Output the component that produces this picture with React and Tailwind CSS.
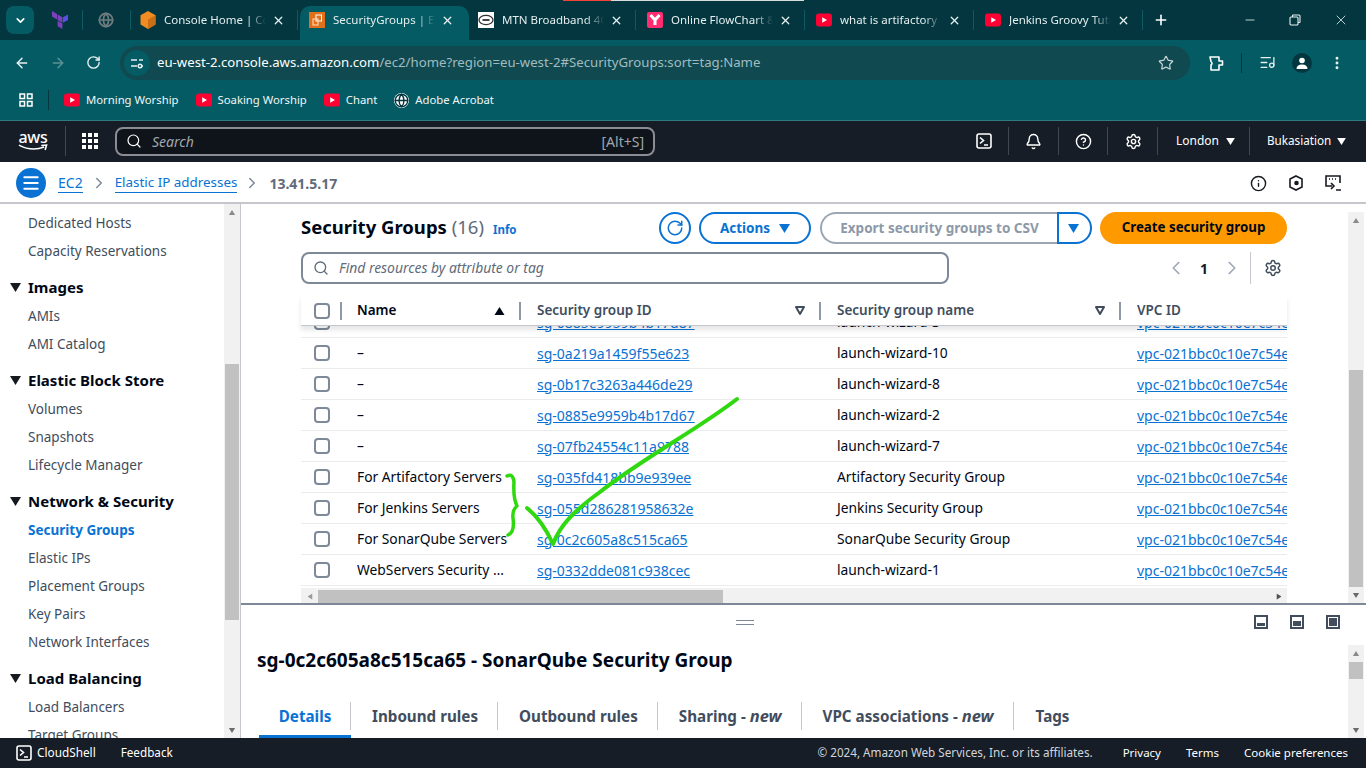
import React from 'react';
import { ArrowLeft, ArrowRight, RotateCw, Star, X, Plus, Minus, ChevronDown, ChevronLeft, ChevronRight, Search, Bell, CircleHelp, Settings, Info, Menu, EllipsisVertical, Globe, ListMusic } from 'lucide-react';

const YouTube = ({ className = '' }) => (
  <svg viewBox="0 0 16 16" className={`w-[16px] h-[16px] shrink-0 ${className}`}>
    <rect x="0" y="1.5" width="16" height="13" rx="3" fill="#ff0033" />
    <path d="M6.2 5.2 L11 8 L6.2 10.8 Z" fill="#fff" />
  </svg>
);

// solid triangle used all over the console (menus, sort, nav sections)
const Tri = ({ up, className = '' }) => (
  <svg viewBox="0 0 10 8" className={`shrink-0 ${className}`} fill="currentColor">
    <path d={up ? 'M5 0 L10 8 H0 Z' : 'M0 0 H10 L5 8 Z'} />
  </svg>
);

const SortTri = () => (
  <svg viewBox="0 0 10 9" className="w-[10px] h-[9px] block" fill="none" stroke="#414d5c" strokeWidth="2" strokeLinejoin="round">
    <path d="M1 1 H9 L5 8 Z" />
  </svg>
);

const CubeIcon = () => (
  <svg viewBox="0 0 16 18" className="w-[16px] h-[18px] shrink-0">
    <path d="M8 0 L15.5 4.2 V13.6 L8 18 L0.5 13.6 V4.2 Z" fill="#f08c22" />
    <path d="M8 8.4 L15.5 4.2 V13.6 L8 18 Z" fill="#c96f15" />
  </svg>
);

const SgIcon = () => (
  <svg viewBox="0 0 16 16" className="w-[16px] h-[16px] shrink-0">
    <rect width="16" height="16" fill="#e2701a" />
    <rect x="7" y="3" width="5.5" height="6" fill="none" stroke="#fff" strokeWidth="1" />
    <rect x="4" y="7" width="5" height="6" fill="none" stroke="#ffe2c8" strokeWidth="1" />
  </svg>
);

const MtnIcon = () => (
  <svg viewBox="0 0 16 16" className="w-[16px] h-[16px] shrink-0">
    <rect width="16" height="16" fill="#fff" />
    <ellipse cx="8" cy="8" rx="7" ry="4.6" fill="none" stroke="#333" strokeWidth="1.3" />
    <rect x="4.5" y="7" width="7" height="2" fill="#444" />
  </svg>
);

const FlowIcon = () => (
  <svg viewBox="0 0 16 16" className="w-[16px] h-[16px] shrink-0">
    <rect width="16" height="16" rx="2" fill="#ff2d6f" />
    <path d="M3.5 3 L8 8 L12.5 3 M8 8 V13" fill="none" stroke="#fff" strokeWidth="3" />
  </svg>
);

const Terraform = () => (
  <svg viewBox="0 0 16 18" className="w-[16px] h-[18px] shrink-0" fill="#7b42bc">
    <path d="M0 0 L5 3 V8.5 L0 5.6 Z" />
    <path d="M5.6 3.4 L10.4 6.2 V11.8 L5.6 9 Z" />
    <path d="M11 6.2 L16 3.4 V9 L11 11.8 Z" fill="#5c4ee5" />
    <path d="M5.6 9.8 L10.4 12.6 V18 L5.6 15.2 Z" />
  </svg>
);

const Tab = ({ icon, title, active }) => (
  <div className={`relative w-[169px] h-[34px] shrink-0 flex items-center pl-[9px] pb-[6px] ${active ? 'bg-[#055b63] rounded-t-[10px]' : ''}`}>
    <span className="w-[16px] flex justify-center">{icon}</span>
    <span className="ml-[8px] w-[102px] overflow-hidden whitespace-nowrap text-[11.5px] text-[#e4eeef] [mask-image:linear-gradient(to_right,black_82%,transparent)]">{title}</span>
    <X size={13} strokeWidth={2.4} className="ml-[6px] text-[#e8f1f2]" />
    {!active && <span className="absolute right-[2px] top-[4px] h-[20px] w-px bg-[#0f5961]" />}
  </div>
);

const TabStrip = () => (
  <div className="relative h-[40px] bg-[#03363f] flex items-end pl-[6px]">
    <span className="absolute left-[563px] top-0 h-px w-[48px] bg-[#f44336]" />
    <span className="absolute left-[611px] top-0 h-px w-[193px] bg-[#d5dcdd]" />
    <div className="self-start mt-[6px] w-[28px] h-[28px] rounded-[8px] bg-[#055b63] flex items-center justify-center text-white">
      <ChevronDown size={13} strokeWidth={3} />
    </div>
    <div className="h-[34px] w-[49px] flex items-center pl-[18px] pb-[6px] relative">
      <Terraform />
      <span className="absolute right-[0px] top-[4px] h-[20px] w-px bg-[#0f5961]" />
    </div>
    <div className="h-[34px] w-[48px] flex items-center pl-[15px] pb-[6px] relative">
      <Globe size={16} className="text-[#6f7c80]" strokeWidth={2.6} />
      <span className="absolute right-0 top-[4px] h-[20px] w-px bg-[#0f5961]" />
    </div>
    <Tab icon={<CubeIcon />} title="Console Home | Console" />
    <Tab active icon={<SgIcon />} title="SecurityGroups | EC2" />
    <Tab icon={<MtnIcon />} title="MTN Broadband 4G" />
    <Tab icon={<FlowIcon />} title="Online FlowChart &" />
    <Tab icon={<YouTube />} title="what is artifactory" />
    <Tab icon={<YouTube />} title="Jenkins Groovy Tutorial" />
    <div className="h-[34px] flex items-center ml-[8px] pb-[6px] text-white"><Plus size={16} strokeWidth={2.4} /></div>
    <div className="ml-auto h-[40px] flex items-center text-[#e8f1f2] pr-[17px] gap-[32px]">
      <Minus size={14} strokeWidth={1.4} />
      <svg viewBox="0 0 12 12" className="w-[12px] h-[12px]" fill="none" stroke="currentColor" strokeWidth="1.1">
        <rect x="1" y="3" width="8" height="8" rx="1" />
        <path d="M3.5 3 V1.5 a.5 .5 0 0 1 .5 -.5 H10 a1 1 0 0 1 1 1 V8 a.5 .5 0 0 1 -.5 .5 H9" />
      </svg>
      <X size={16} strokeWidth={1.2} />
    </div>
  </div>
);

const Toolbar = () => (
  <div className="h-[44px] bg-[#055b63] flex items-center pt-px text-[#e8f1f2]">
    <ArrowLeft size={16} strokeWidth={2.2} className="ml-[14px]" />
    <ArrowRight size={16} strokeWidth={2.2} className="ml-[20px] text-[#5c9298]" />
    <RotateCw size={15} strokeWidth={2.2} className="ml-[20px]" />
    <div className="ml-[19px] w-[1070px] h-[34px] rounded-full bg-[#10494f] flex items-center pl-[4px]">
      <span className="w-[26px] h-[26px] rounded-full bg-[#055b63] flex items-center justify-center">
        <svg viewBox="0 0 14 14" className="w-[14px] h-[14px]" fill="none" stroke="#e8f1f2" strokeWidth="1.4">
          <path d="M1 4 H7 M11 10 H13 M1 10 H7" />
          <path d="M9 4 H13" />
          <circle cx="10" cy="10" r="1.8" />
        </svg>
      </span>
      <span className="ml-[7px] text-[13.2px] text-white whitespace-nowrap">eu-west-2.console.aws.amazon.com<span className="text-[#a0bcc0]">/ec2/home?region=eu-west-2#SecurityGroups:sort=tag:Name</span></span>
      <Star size={16} strokeWidth={1.8} className="ml-auto mr-[16px] text-[#c6d4d6]" />
    </div>
    <svg viewBox="0 0 16 18" className="ml-[18px] w-[16px] h-[18px]" fill="none" stroke="#fff" strokeWidth="1.6">
      <path d="M2 3 H11 V7 H14.5 V11 H11 V16 H3 V11 Q5 9.500 3 7.500 Z" strokeLinejoin="round" />
    </svg>
    <span className="ml-[17px] h-[20px] w-px bg-[#03363f]" />
    <ListMusic size={17} strokeWidth={1.8} className="ml-[17px]" />
    <span className="ml-[16px] w-[20px] h-[20px] rounded-full bg-[#03363f] flex items-center justify-center">
      <svg viewBox="0 0 14 14" className="w-[14px] h-[14px]" fill="#fff"><circle cx="7" cy="4.500" r="2.800" /><path d="M1.500 13 Q1.500 8.500 7 8.500 Q12.500 8.500 12.500 13 Z" /></svg>
    </span>
    <EllipsisVertical size={16} strokeWidth={2.4} className="ml-[17px]" />
  </div>
);

const Bookmark = ({ icon, label }) => (
  <div className="flex items-center gap-[6px] mr-[17px]">
    {icon}
    <span className="text-[11.3px] text-[#f0f6f6]">{label}</span>
  </div>
);

const Bookmarks = () => (
  <div className="h-[36px] bg-[#055b63] flex items-center pl-[19px] pb-[4px]">
    <svg viewBox="0 0 14 14" className="w-[14px] h-[14px]" fill="none" stroke="#fff" strokeWidth="1.5">
      <rect x="1" y="1" width="4.500" height="4.500" /><rect x="8.500" y="1" width="4.500" height="4.500" />
      <rect x="1" y="8.500" width="4.500" height="4.500" /><rect x="8.500" y="8.500" width="4.500" height="4.500" />
    </svg>
    <span className="ml-[15px] mr-[15px] h-[20px] w-px bg-[#03363f]" />
    <Bookmark icon={<YouTube />} label="Morning Worship" />
    <Bookmark icon={<YouTube />} label="Soaking Worship" />
    <Bookmark icon={<YouTube />} label="Chant" />
    <Bookmark icon={<Globe size={15} className="text-[#03363f] bg-white rounded-full" strokeWidth={2.2} />} label="Adobe Acrobat" />
  </div>
);

const NavSep = () => <span className="block w-px h-[28px] bg-[#414750]" />;

const TopNav = () => (
  <div className="h-[42px] bg-[#161d26] border-t border-[#2f7c80] flex items-center pb-px text-white">
    <div className="w-[32px] ml-[17px] flex flex-col items-center leading-none">
      <span className="text-[16px] leading-[13px] font-medium tracking-[-0.3px]">aws</span>
      <svg viewBox="0 0 32 8" className="w-[31px] h-[8px]" fill="none" stroke="#fff" strokeWidth="1.600"><path d="M1 1 Q14 8 27 3 M24 1.500 L29.500 1 L28 6" /></svg>
    </div>
    <span className="ml-[16px] w-px h-[30px] bg-[#414750]" />
    <div className="ml-[16px] w-[16px] grid grid-cols-3 gap-[2px]">
      {[...Array(9)].map((_, i) => <span key={i} className="h-[4px] w-[4px] bg-white" />)}
    </div>
    <div className="ml-[17px] w-[540px] h-[29px] rounded-[8px] border-2 border-[#8c8c94] bg-[#0f141a] flex items-center pl-[9px] pr-[9px]">
      <Search size={16} strokeWidth={1.8} />
      <span className="ml-[10px] text-[14px] italic text-[#a0a7ae]">Search</span>
      <span className="ml-auto text-[14px] text-[#a0a7ae]">[Alt+S]</span>
    </div>
    <svg viewBox="0 0 16 16" className="ml-[321px] w-[16px] h-[16px]" fill="none" stroke="#fff" strokeWidth="1.600">
      <rect x="1" y="1" width="14" height="14" rx="2" /><path d="M4 4.500 L7.500 7.500 L4 10.500 M8 12 H12" />
    </svg>
    <span className="ml-[16px]"><NavSep /></span>
    <Bell size={17} strokeWidth={2} className="ml-[16px]" />
    <span className="ml-[16px]"><NavSep /></span>
    <CircleHelp size={17} strokeWidth={2} className="ml-[16px]" />
    <span className="ml-[15px]"><NavSep /></span>
    <Settings size={17} strokeWidth={2} className="ml-[17px]" />
    <span className="ml-[15px]"><NavSep /></span>
    <span className="ml-[18px] w-[42px] text-[12px]">London</span>
    <Tri className="ml-[8px] w-[9px] h-[7px]" />
    <span className="ml-[14px]"><NavSep /></span>
    <span className="ml-[17px] w-[64px] whitespace-nowrap text-[11.7px]">Bukasiation</span>
    <Tri className="ml-[6px] w-[9px] h-[7px]" />
  </div>
);

const Breadcrumb = () => (
  <div className="h-[42px] bg-white border-b-2 border-[#c6c6cd] flex items-center pt-[2px]">
    <span className="ml-[16px] w-[30px] h-[30px] rounded-full bg-[#0972d3] flex items-center justify-center text-white"><Menu size={20} strokeWidth={2.400} /></span>
    <a className="ml-[12px] text-[14px] text-[#0972d3] border-b border-[#0972d3] leading-[19px]">EC2</a>
    <ChevronRight size={18} className="ml-[7px] text-[#7d8998]" />
    <a className="ml-[7px] text-[13.4px] text-[#0972d3] border-b border-[#0972d3] leading-[19px]">Elastic IP addresses</a>
    <ChevronRight size={18} className="ml-[6px] text-[#7d8998]" />
    <span className="ml-[8px] text-[14px] font-bold text-[#5f6b7a]">13.41.5.17</span>
    <Info size={17} strokeWidth={2} className="ml-auto text-[#16191f]" />
    <svg viewBox="0 0 16 16" className="ml-[21px] w-[16px] h-[16px]" fill="none" stroke="#16191f" strokeWidth="1.600">
      <path d="M8 1 L14 4 V12 L8 15 L2 12 V4 Z" /><circle cx="8.500" cy="8" r="1.500" fill="#16191f" />
    </svg>
    <svg viewBox="0 0 16 16" className="ml-[21px] mr-[25px] w-[16px] h-[16px]" fill="none" stroke="#16191f" strokeWidth="1.600">
      <path d="M7 11 H1 V1 H15 V8" /><path d="M4 4 H5 M7 4 H8 M10 4 H11" /><path d="M6 8 L9 11 L6 14 M11 15 H16" />
    </svg>
  </div>
);

const navItems = [
  { label: 'Dedicated Hosts' }, { label: 'Capacity Reservations' },
  { head: 'Images' }, { label: 'AMIs' }, { label: 'AMI Catalog' },
  { head: 'Elastic Block Store' }, { label: 'Volumes' }, { label: 'Snapshots' }, { label: 'Lifecycle Manager' },
  { head: 'Network & Security' }, { label: 'Security Groups', active: true }, { label: 'Elastic IPs' }, { label: 'Placement Groups' }, { label: 'Key Pairs' }, { label: 'Network Interfaces' },
  { head: 'Load Balancing' }, { label: 'Load Balancers' }, { label: 'Target Groups' },
];

const VScroll = ({ className, thumbTop, thumbHeight }) => (
  <div className={`w-[16px] bg-[#f1f1f1] flex flex-col shrink-0 ${className}`}>
    <span className="h-[16px] flex items-center justify-center text-[#8a8a8a]"><Tri up className="w-[8px] h-[5px]" /></span>
    <span className="w-[14px] mx-px bg-[#c1c1c1] shrink-0" style={{ marginTop: thumbTop, height: thumbHeight }} />
    <span className="mt-auto h-[16px] flex items-center justify-center text-[#6b6b6b]"><Tri className="w-[8px] h-[5px]" /></span>
  </div>
);

const Sidebar = () => (
  <div className="w-[241px] shrink-0 flex border-r border-[#c6c6cd] h-full">
    <div className="w-[224px] overflow-hidden pt-[5px]">
      {navItems.map((item) =>
        item.head ? (
          <div key={item.head} className="h-[37px] pt-[7px] flex items-center">
            <Tri className="ml-[10px] mr-[7px] w-[11px] h-[9px] text-[#16191f]" />
            <span className="text-[15px] font-bold text-[#000716]">{item.head}</span>
          </div>
        ) : (
          <div key={item.label} className={`h-[28px] flex items-center pl-[28px] text-[13.500px] ${item.active ? 'font-bold text-[#0972d3]' : 'text-[#414d5c]'}`}>{item.label}</div>
        )
      )}
    </div>
    <VScroll className="h-full" thumbTop={144} thumbHeight={256} />
  </div>
);

const ColSep = () => <span className="block w-[2px] h-[18px] bg-[#8d99a8]" />;

const Checkbox = () => <span className="block w-[16px] h-[16px] rounded-[4px] border-2 border-[#7d8998] bg-white" />;

const rows = [
  ['–', 'sg-0885e9959b4b17d87', 'launch-wizard-3'],
  ['–', 'sg-0a219a1459f55e623', 'launch-wizard-10'],
  ['–', 'sg-0b17c3263a446de29', 'launch-wizard-8'],
  ['–', 'sg-0885e9959b4b17d67', 'launch-wizard-2'],
  ['–', 'sg-07fb24554c11a9788', 'launch-wizard-7'],
  ['For Artifactory Servers', 'sg-035fd418bb9e939ee', 'Artifactory Security Group'],
  ['For Jenkins Servers', 'sg-055d286281958632e', 'Jenkins Security Group'],
  ['For SonarQube Servers', 'sg-0c2c605a8c515ca65', 'SonarQube Security Group'],
  ['WebServers Security Group', 'sg-0332dde081c938cec', 'launch-wizard-1'],
];

const Row = ({ row }) => (
  <div className="h-[31px] shrink-0 border-b border-[#e9ebed] grid grid-cols-[56px_180px_300px_300px_150px] items-center text-[14px] text-[#000716]">
    <span className="pl-[13px]"><Checkbox /></span>
    <span className="truncate pr-[28px] text-[13.800px]">{row[0]}</span>
    <a className="text-[#0972d3] underline">{row[1]}</a>
    <span className="text-[13.800px]">{row[2]}</span>
    <a className="text-[#0972d3] underline whitespace-nowrap overflow-hidden">vpc-021bbc0c10e7c54e89</a>
  </div>
);

const Toolbar2 = () => (
  <div className="h-[32px] mt-[8px] flex items-center">
    <h1 className="text-[18.500px] font-bold text-[#000716] whitespace-nowrap -mt-[2px]">Security Groups <span className="font-normal text-[#5f6b7a]">(16)</span></h1>
    <a className="ml-[9px] mt-[3px] text-[11.500px] font-bold text-[#0972d3]">Info</a>
    <span className="ml-auto w-[32px] h-[32px] rounded-full border-2 border-[#0972d3] flex items-center justify-center text-[#0972d3]"><RotateCw size={18} strokeWidth={2} /></span>
    <span className="ml-[8px] w-[112px] h-[32px] rounded-full border-2 border-[#0972d3] flex items-center justify-center gap-[9px] text-[13.500px] font-bold text-[#0972d3]">Actions <Tri className="w-[11px] h-[9px]" /></span>
    <div className="ml-[9px] w-[272px] h-[32px] flex">
      <span className="w-[237px] rounded-l-full border-2 border-r-0 border-[#9ba7b6] flex items-center justify-center text-[13.500px] font-bold text-[#8d99a8]">Export security groups to CSV</span>
      <span className="w-[35px] rounded-r-full border-2 border-[#0972d3] flex items-center justify-center text-[#0972d3] pr-[2px]"><Tri className="w-[11px] h-[9px]" /></span>
    </div>
    <span className="ml-[8px] w-[187px] h-[32px] rounded-full bg-[#ff9900] flex items-center justify-center text-[13.300px] font-bold text-[#000716]">Create security group</span>
  </div>
);

const Filter = () => (
  <div className="h-[32px] mt-[8px] flex items-center">
    <div className="w-[648px] h-[32px] rounded-[8px] border-2 border-[#7d8998] flex items-center pl-[10px]">
      <Search size={16} strokeWidth={2} className="text-[#5f6b7a]" />
      <span className="ml-[10px] text-[13.900px] italic text-[#5f6b7a]">Find resources by attribute or tag</span>
    </div>
    <ChevronLeft size={22} strokeWidth={1.800} className="ml-[216px] text-[#9ba7b6]" />
    <span className="ml-[13px] text-[14px] font-bold text-[#16191f]">1</span>
    <ChevronRight size={22} strokeWidth={1.800} className="ml-[13px] text-[#9ba7b6]" />
    <span className="ml-[7px] w-px h-[32px] bg-[#c6c6cd]" />
    <Settings size={18} strokeWidth={2} className="ml-[13px] text-[#414d5c]" />
  </div>
);

const TablePanel = () => (
  <div className="h-[401px] shrink-0 flex border-b-2 border-[#7d8998]">
    <div className="w-[1107px] pl-[60px] pr-[61px] overflow-hidden">
      <Toolbar2 />
      <Filter />
      <div className="relative z-10 mt-[12px] h-[30px] bg-white grid grid-cols-[56px_180px_300px_300px_150px] items-center text-[13.500px] font-semibold text-[#414d5c] border-b border-[#c6c6cd] shadow-[0_4px_5px_rgba(0,7,22,0.10)]">
        <div className="flex items-center pl-[13px]"><Checkbox /><span className="ml-[10px]"><ColSep /></span></div>
        <div className="flex items-center text-[#000716]">Name<Tri up className="ml-auto w-[11px] h-[8px]" /><span className="ml-[14px] mr-[16px]"><ColSep /></span></div>
        <div className="flex items-center">Security group ID<span className="ml-auto"><SortTri /></span><span className="ml-[14px] mr-[16px]"><ColSep /></span></div>
        <div className="flex items-center">Security group name<span className="ml-auto"><SortTri /></span><span className="ml-[14px] mr-[16px]"><ColSep /></span></div>
        <div>VPC ID</div>
      </div>
      <div className="h-[12px] overflow-hidden flex flex-col justify-end"><Row row={rows[0]} /></div>
      {rows.slice(1).map((row) => <Row key={row[1]} row={row} />)}
      <div className="mt-[2px] h-[16px] bg-[#f1f1f1] flex items-center">
        <span className="w-[17px] flex justify-center text-[#9a9a9a]"><Tri up className="w-[8px] h-[5px] -rotate-90" /></span>
        <span className="w-[405px] h-[13px] bg-[#c1c1c1]" />
        <span className="ml-auto w-[17px] flex justify-center text-[#505050]"><Tri up className="w-[8px] h-[5px] rotate-90" /></span>
      </div>
    </div>
    <VScroll className="mt-[8px]" thumbTop={142} thumbHeight={217} />
  </div>
);

const PaneIcon = ({ fill }) => (
  <span className="w-[14px] h-[14px] border-2 border-[#414d5c] p-px flex items-end">
    <span className={`w-full bg-[#414d5c] ${fill}`} />
  </span>
);

const tabs = [
  { label: 'Details', active: true },
  { label: 'Inbound rules' },
  { label: 'Outbound rules' },
  { label: 'Sharing', tag: 'new' },
  { label: 'VPC associations', tag: 'new' },
  { label: 'Tags', last: true },
];

const DetailPanel = () => (
  <div className="flex-1 flex min-h-0">
    <div className="w-[1107px] pl-[16px] overflow-hidden">
      <div className="h-[28px] relative flex items-center">
        <span className="ml-[479px] mt-[6px] w-[18px] h-[5px] border-y border-[#7d8998]" />
        <div className="ml-auto mr-[8px] mt-[6px] flex gap-[22px]">
          <PaneIcon fill="h-[3px]" />
          <PaneIcon fill="h-[5px]" />
          <PaneIcon fill="h-full" />
        </div>
      </div>
      <h2 className="mt-[13px] text-[19px] font-bold leading-[28px] text-[#000716]">sg-0c2c605a8c515ca65 - SonarQube Security Group</h2>
      <div className="mt-[28px] ml-[2px] flex">
        {tabs.map((t) => (
          <div key={t.label} className={`relative h-[36px] flex items-center px-[20px] text-[15.200px] font-bold whitespace-nowrap ${t.active ? 'pb-[5px] text-[#0972d3] w-[92px] justify-center border-b-[3px] border-[#0972d3]' : 'pb-[8px] text-[#414d5c] ml-[1px]'} ${t.last ? 'ml-[2px]' : ''}`}>
            {t.label}
            {t.tag && <span>&nbsp;- <em className="text-[16.500px]">{t.tag}</em></span>}
            {!t.last && <span className="absolute right-0 top-0 w-px h-[28px] bg-[#c6c6cd]" />}
          </div>
        ))}
      </div>
    </div>
    <VScroll className="mt-[40px]" thumbTop={1} thumbHeight={17} />
  </div>
);

const Footer = () => (
  <div className="h-[30px] bg-[#161d26] flex items-center text-[11.500px] text-white">
    <svg viewBox="0 0 16 16" className="ml-[16px] w-[16px] h-[16px]" fill="none" stroke="#fff" strokeWidth="1.600">
      <rect x="1" y="1" width="14" height="14" rx="2" /><path d="M4 4.500 L7.500 7.500 L4 10.500 M8 12 H12" />
    </svg>
    <span className="ml-[5px] text-[11.800px]">CloudShell</span>
    <span className="ml-[25px] text-[11.700px]">Feedback</span>
    <span className="ml-auto text-[11.700px] text-[#d1d5db]">© 2024, Amazon Web Services, Inc. or its affiliates.</span>
    <span className="ml-[30px]">Privacy</span>
    <span className="ml-[25px]">Terms</span>
    <span className="ml-[25px] mr-[18px]">Cookie preferences</span>
  </div>
);

// the green pen marks drawn on top of the table
const PenMarks = () => (
  <svg viewBox="0 0 1366 768" className="absolute inset-0 w-[1366px] h-[768px] pointer-events-none z-20" fill="none" stroke="#2fd80f" strokeLinecap="round" strokeLinejoin="round">
    <path strokeWidth="4" d="M527 508 Q542 520 553 544 C560 525 575 510 600 492 C640 460 700 428 737 399" />
    <path strokeWidth="3.500" d="M507 476 Q513 473 514 482 Q513 498 517 506 Q512 510 513 518 Q515 532 508 535" />
  </svg>
);

export default function App() {
  return (
    <div className="relative w-[1366px] h-[768px] overflow-hidden flex flex-col bg-white font-['Noto_Sans','Open_Sans',sans-serif]">
      <TabStrip />
      <Toolbar />
      <Bookmarks />
      <TopNav />
      <Breadcrumb />
      <div className="h-[534px] flex">
        <Sidebar />
        <div className="flex-1 flex flex-col min-w-0">
          <TablePanel />
          <DetailPanel />
        </div>
      </div>
      <Footer />
      <PenMarks />
    </div>
  );
}
